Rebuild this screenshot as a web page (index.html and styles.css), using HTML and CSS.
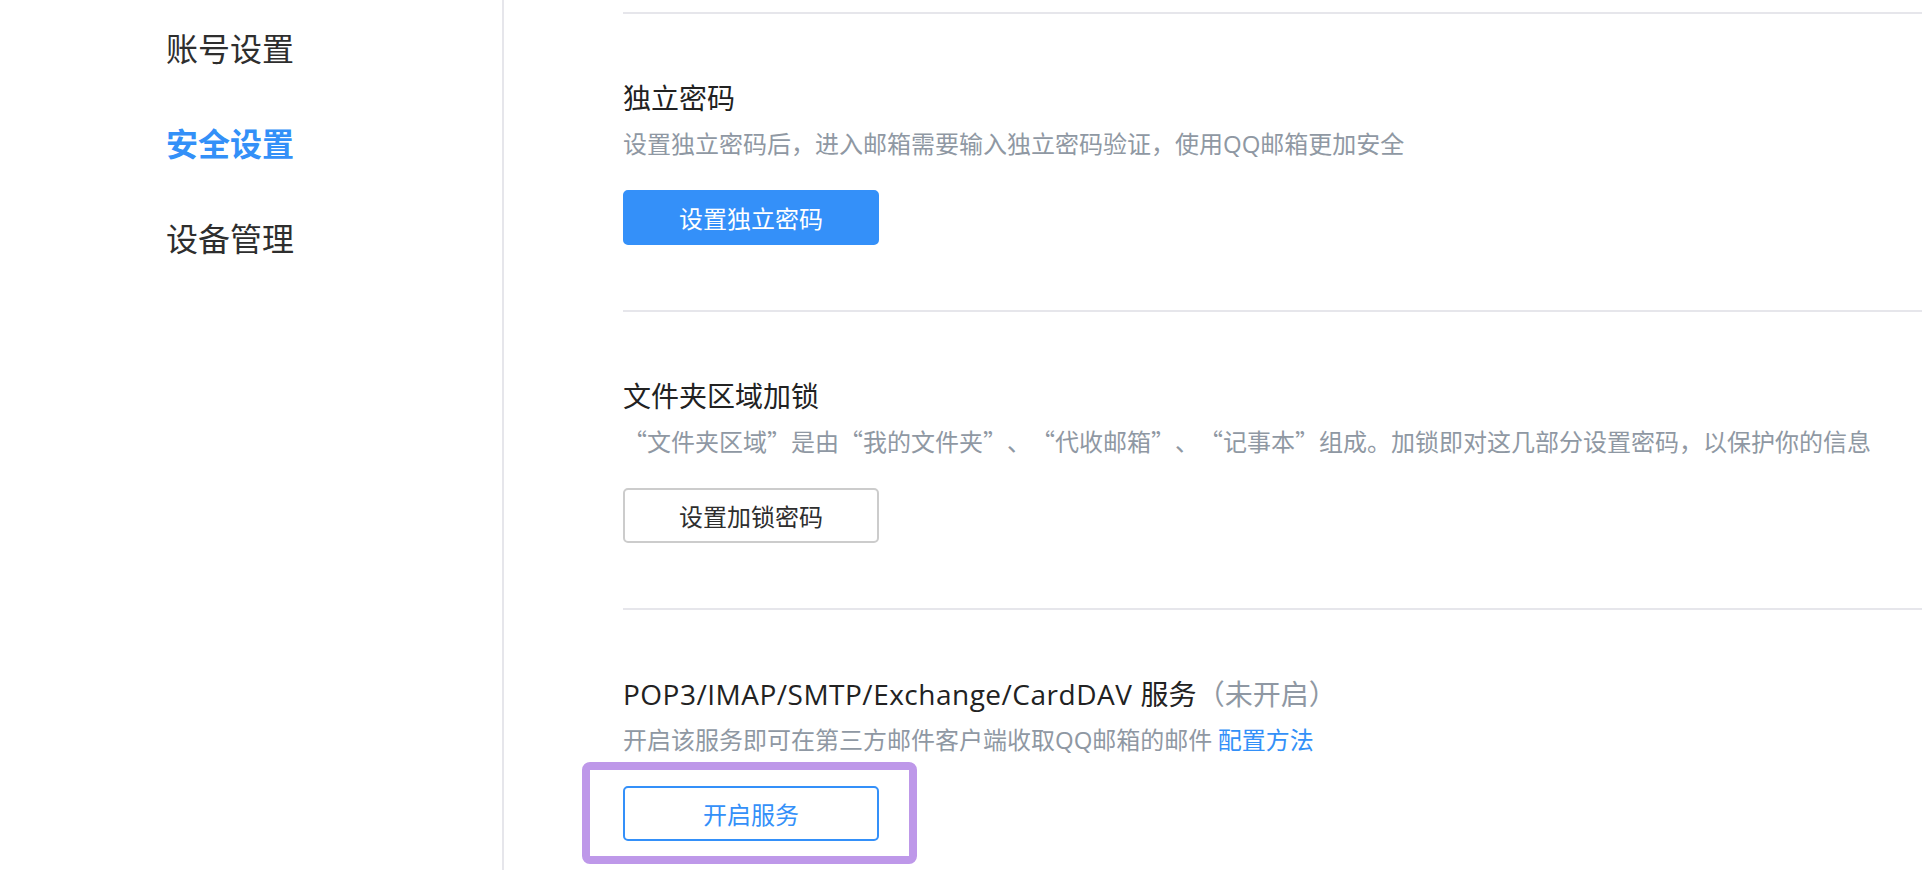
FILE: index.html
```html
<!DOCTYPE html>
<html lang="zh-CN">
<head>
<meta charset="utf-8">
<title>安全设置</title>
<link rel="stylesheet" href="styles.css">
</head>
<body>
<div class="page">
  <aside class="sidebar">
    <nav class="nav">
      <a class="nav-item">账号设置</a>
      <a class="nav-item active">安全设置</a>
      <a class="nav-item">设备管理</a>
    </nav>
  </aside>
  <main class="main">
    <section class="block">
      <h3 class="block-title">独立密码</h3>
      <p class="block-desc">设置独立密码后，进入邮箱需要输入独立密码验证，使用<span class="latin-sm">QQ</span>邮箱更加安全</p>
      <button class="btn btn-primary">设置独立密码</button>
    </section>
    <section class="block">
      <h3 class="block-title">文件夹区域加锁</h3>
      <p class="block-desc">“文件夹区域”是由“我的文件夹”、“代收邮箱”、“记事本”组成。加锁即对这几部分设置密码，以保护你的信息</p>
      <button class="btn btn-default">设置加锁密码</button>
    </section>
    <section class="block">
      <h3 class="block-title"><span class="latin">POP3/IMAP/SMTP/Exchange/CardDAV</span> 服务<span class="status">（未开启）</span></h3>
      <p class="block-desc">开启该服务即可在第三方邮件客户端收取<span class="latin-sm">QQ</span>邮箱的邮件 <a class="link">配置方法</a></p>
      <span class="highlight"><button class="btn btn-outline">开启服务</button></span>
    </section>
  </main>
</div>
</body>
</html>
```
FILE: styles.css
```css
html, body {
  margin: 0;
  padding: 0;
  height: 100%;
  overflow: hidden;
  background: #ffffff;
}

body {
  font-family: "Noto Sans CJK SC", "Microsoft YaHei", sans-serif;
  color: #222222;
  text-spacing-trim: space-all;
  font-feature-settings: "halt" 0, "chws" 0;
}

.page {
  display: flex;
  height: 100%;
}

.sidebar {
  width: 502px;
  flex: none;
  border-right: 2px solid #e6e6eb;
  box-sizing: content-box;
}

.nav {
  display: flex;
  flex-direction: column;
  gap: 47px;
  padding: 23px 0 0 166px;
}

.nav-item {
  font-size: 32px;
  line-height: 48px;
  color: #2e2e2e;
  cursor: pointer;
}

.nav-item.active {
  color: #3390f8;
  font-weight: 700;
}

.main {
  flex: 1;
  padding: 12px 0 0 119px;
  min-width: 0;
}

.block {
  border-top: 2px solid #e6e6eb;
  padding: 63px 0 65px 0;
}

.block-title {
  margin: 0;
  height: 40px;
  font-size: 28px;
  line-height: 40px;
  font-weight: 400;
  color: #222222;
}

.latin {
  font-family: "Open Sans", "Noto Sans", sans-serif;
  letter-spacing: 0.5px;
  margin-right: 2px;
  line-height: 1;
}

.latin-sm {
  font-family: "Open Sans", "Noto Sans", sans-serif;
  line-height: 1;
}

.status {
  color: #8f98a3;
}

.block-desc {
  margin: 8px 0 0 0;
  height: 36px;
  font-size: 24px;
  line-height: 36px;
  color: #8f98a3;
}

.link {
  color: #3390f8;
  cursor: pointer;
}

.btn {
  display: block;
  margin-top: 29px;
  width: 256px;
  height: 55px;
  box-sizing: border-box;
  border-radius: 5px;
  font-family: "Noto Sans CJK SC", "Microsoft YaHei", sans-serif;
  font-size: 24px;
  cursor: pointer;
  padding: 0;
}

.btn-primary {
  background: #3490f9;
  border: 2px solid #3490f9;
  color: #ffffff;
}

.btn-default {
  background: #ffffff;
  border: 2px solid #cccccc;
  color: #2e2e2e;
}

.btn-outline {
  background: #ffffff;
  border: 2px solid #3490f9;
  color: #3490f9;
  margin-top: 0;
}

.highlight {
  position: relative;
  display: block;
  width: 256px;
  margin-top: 29px;
}

.highlight::after {
  content: "";
  position: absolute;
  top: -24px;
  left: -41px;
  right: -38px;
  bottom: -23px;
  border: 8px solid #be98e9;
  border-radius: 8px;
  pointer-events: none;
}
```
